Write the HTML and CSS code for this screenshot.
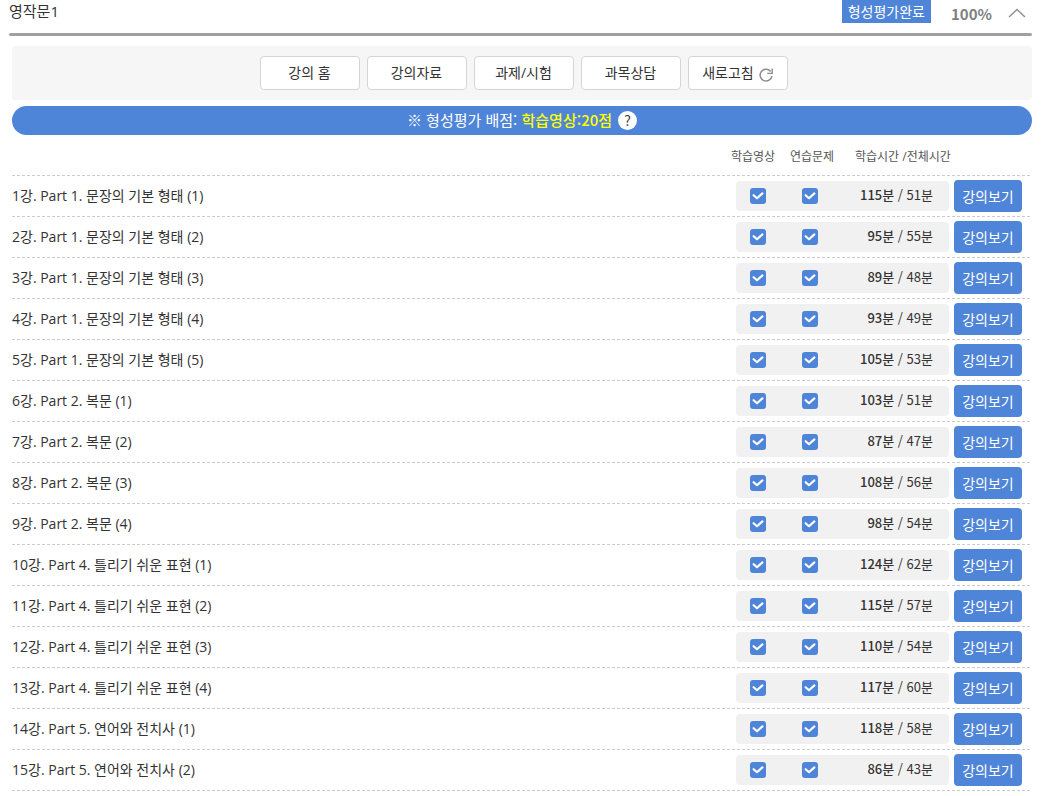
FILE: index.html
```
<!DOCTYPE html>
<html lang="ko">
<head>
    <meta charset="UTF-8">
    <meta name="viewport" content="width=device-width, initial-scale=1.0">
    <title>영작문1</title>
    <link rel="stylesheet" href="styles.css">
</head>
<body>

    <!-- Course title and progress -->
    <header class="course-header">
        <h1>영작문1</h1>
        <span class="badge">형성평가완료</span>
        <strong class="progress">100%</strong>
        <button type="button" class="toggle" aria-label="접기">
            <svg width="18" height="10" viewBox="0 0 18 10"><path d="M1 9 L9 1.5 L17 9" fill="none" stroke="#8f8f8f" stroke-width="1.4"/></svg>
        </button>
    </header>

    <main class="content">
        <nav class="menu">
            <button type="button">강의 홈</button>
            <button type="button">강의자료</button>
            <button type="button">과제/시험</button>
            <button type="button">과목상담</button>
            <button type="button" class="refresh">새로고침
                <svg width="14" height="14" viewBox="0 0 14 14"><path d="M11.6 3.4 A5.9 5.9 0 1 0 12.9 7.8" fill="none" stroke="#8c8c8c" stroke-width="1.5"/><path d="M13.2 0.4 V5.4 H8.2" fill="none" stroke="#8c8c8c" stroke-width="1.4"/></svg>
            </button>
        </nav>

        <div class="notice">
            <span>※ 형성평가 배점: <strong>학습영상:20점</strong></span>
            <button type="button" class="help" aria-label="도움말">?</button>
        </div>

        <!-- Lecture list -->
        <table class="lectures">
            <colgroup>
                <col>
                <col class="col-video">
                <col class="col-quiz">
                <col class="col-time">
                <col class="col-view">
            </colgroup>
            <thead>
                <tr>
                    <th></th>
                    <th>학습영상</th>
                    <th class="indent">연습문제</th>
                    <th class="indent">학습시간 /전체시간</th>
                    <th></th>
                </tr>
            </thead>
            <tbody id="lecture-rows"></tbody>
        </table>
    </main>

    <script>
        // title, studied minutes, total minutes
        const lectures = [
            ['Part 1. 문장의 기본 형태 (1)', 115, 51],
            ['Part 1. 문장의 기본 형태 (2)', 95, 55],
            ['Part 1. 문장의 기본 형태 (3)', 89, 48],
            ['Part 1. 문장의 기본 형태 (4)', 93, 49],
            ['Part 1. 문장의 기본 형태 (5)', 105, 53],
            ['Part 2. 복문 (1)', 103, 51],
            ['Part 2. 복문 (2)', 87, 47],
            ['Part 2. 복문 (3)', 108, 56],
            ['Part 2. 복문 (4)', 98, 54],
            ['Part 4. 틀리기 쉬운 표현 (1)', 124, 62],
            ['Part 4. 틀리기 쉬운 표현 (2)', 115, 57],
            ['Part 4. 틀리기 쉬운 표현 (3)', 110, 54],
            ['Part 4. 틀리기 쉬운 표현 (4)', 117, 60],
            ['Part 5. 연어와 전치사 (1)', 118, 58],
            ['Part 5. 연어와 전치사 (2)', 86, 43]
        ];

        const check = (label) => `
            <label class="check">
                <input type="checkbox" checked aria-label="${label}">
                <svg width="16" height="16" viewBox="0 0 16 16"><path d="M3.6 7.2 L7 10.2 L12.4 5.4" fill="none" stroke="#fff" stroke-width="2.2" stroke-linecap="round" stroke-linejoin="round"/></svg>
            </label>`;

        document.getElementById('lecture-rows').innerHTML = lectures.map(([title, done, total], i) => `
            <tr>
                <td class="title">${i + 1}강. ${title}</td>
                <td><div class="cell cell-video">${check(`${i + 1}강 학습영상`)}</div></td>
                <td><div class="cell cell-quiz">${check(`${i + 1}강 연습문제`)}</div></td>
                <td><div class="cell cell-time"><span><b>${done}분</b> / ${total}분</span></div></td>
                <td><button type="button" class="view">강의보기</button></td>
            </tr>`).join('');
    </script>
</body>
</html>
```
FILE: styles.css
```
* {
    box-sizing: border-box;
}
body {
    margin: 0;
    padding: 0 13px 0 9px;
    font-family: "Open Sans", "Noto Sans CJK KR", sans-serif;
    font-size: 14px;
    color: #333;
    background-color: #fff;
}
button {
    font-family: inherit;
    color: inherit;
    padding: 0;
    cursor: pointer;
}
svg {
    display: block;
}
/* Course title and progress */
.course-header {
    display: flex;
    align-items: center;
    height: 36px;
    padding-bottom: 10px;
    position: relative;
}
.course-header::after {
    content: "";
    position: absolute;
    left: 0;
    right: 0;
    bottom: 0;
    height: 3px;
    border-radius: 2px;
    background-color: #a0a0a0;
}
.course-header h1 {
    margin: 0 auto 0 0;
    font-size: 15px;
    font-weight: 400;
    line-height: 22px;
    align-self: flex-start;
}
.badge {
    align-self: flex-start;
    padding: 0 6px;
    line-height: 23px;
    color: #fff;
    background-color: #4f85d8;
}
.progress {
    margin: 0 16px 0 20px;
    font-family: "Noto Sans CJK KR", sans-serif;
    font-size: 15px;
    color: #808080;
}
.toggle {
    margin-right: 6px;
    border: none;
    background: none;
}
.content {
    padding-left: 3px;
}
/* Menu buttons */
.menu {
    display: flex;
    justify-content: center;
    gap: 7px;
    margin-top: 10px;
    padding: 10px 10px 10px 13px;
    border-radius: 4px;
    background-color: #f6f6f6;
}
.menu button {
    width: 100px;
    height: 34px;
    border: 1px solid #d5d5d5;
    border-radius: 4px;
    padding-bottom: 2px;
    background-color: #fff;
    font-size: 14px;
}
.menu .refresh {
    display: flex;
    align-items: center;
    justify-content: center;
    gap: 5px;
}
.refresh svg {
    margin-top: 5px;
}
/* Score notice */
.notice {
    display: flex;
    align-items: center;
    justify-content: center;
    gap: 6px;
    height: 29px;
    margin-top: 6px;
    border-radius: 15px;
    font-family: "Noto Sans CJK KR", sans-serif;
    font-size: 15px;
    line-height: 27px;
    color: #fff;
    background-color: #4f85d8;
}
.notice span {
    padding-bottom: 2px;
}
.notice strong {
    font-weight: 500;
    color: #ff0;
}
.help {
    width: 19px;
    height: 19px;
    border: none;
    border-radius: 50%;
    color: #333;
    background-color: #fff;
    font-size: 14px;
    line-height: 19px;
}
/* Lecture list */
.lectures {
    width: 100%;
    table-layout: fixed;
    border-collapse: collapse;
}
.col-video {
    width: 49px;
}
.col-quiz {
    width: 65px;
}
.col-time {
    width: 109px;
}
.col-view {
    width: 78px;
}
.lectures th,
.lectures td {
    height: 41px;
    padding: 0 0 1px;
    text-align: left;
    white-space: nowrap;
}
.lectures th {
    padding-top: 2px;
    font-size: 12px;
    font-weight: 400;
    color: #555;
}
.lectures .indent {
    padding-left: 10px;
}
.lectures .title {
    padding-bottom: 4px;
}
.lectures tr {
    background: repeating-linear-gradient(90deg, #ccc 0 3px, transparent 3px 5px) left bottom / 100% 1px no-repeat;
}
/* Grey strip running through the three status columns */
.cell {
    display: flex;
    align-items: center;
    justify-content: center;
    height: 30px;
    background-color: #f1f1f1;
}
.cell-video {
    margin-left: 5px;
    border-radius: 4px 0 0 4px;
}
.cell-quiz {
    padding-right: 5px;
}
.cell-time {
    justify-content: flex-end;
    margin-right: 5px;
    padding: 0 16px 3px 0;
    border-radius: 0 4px 4px 0;
    font-family: "Noto Sans CJK KR", sans-serif;
    font-size: 13px;
}
.cell-time b {
    font-weight: 500;
}
.check {
    display: grid;
}
.check input,
.check svg {
    grid-area: 1 / 1;
}
.check input {
    appearance: none;
    width: 16px;
    height: 16px;
    margin: 0;
    border-radius: 3px;
    background-color: #4f85d8;
}
.check svg {
    pointer-events: none;
    visibility: hidden;
}
.check input:checked + svg {
    visibility: visible;
}
.view {
    display: block;
    width: 68px;
    height: 32px;
    border: none;
    border-radius: 4px;
    color: #fff;
    background-color: #4f85d8;
    font-size: 14px;
}
```
